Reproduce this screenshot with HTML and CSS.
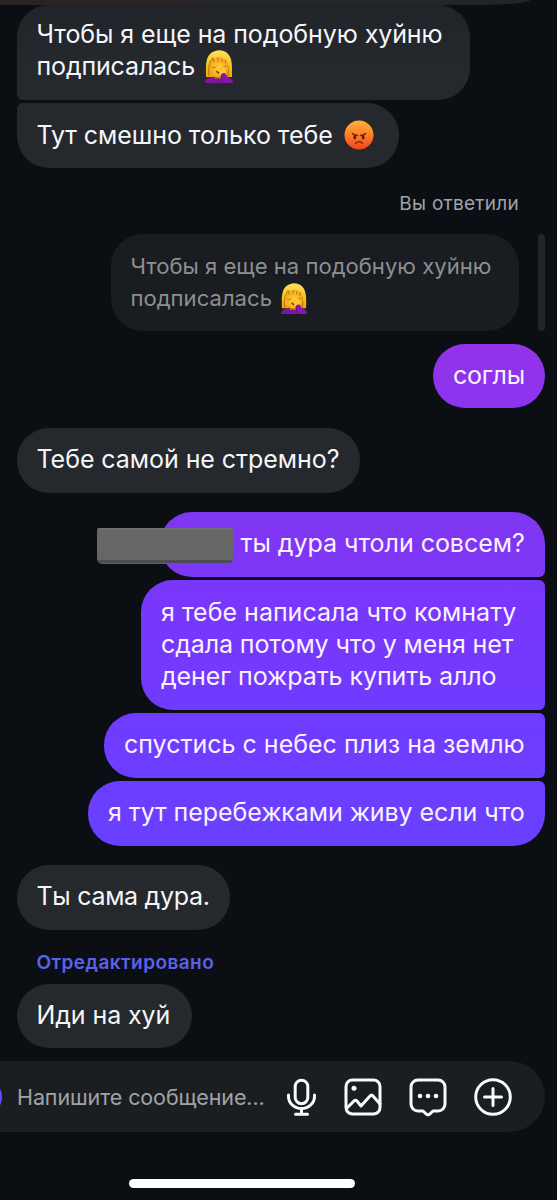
FILE: index.html
```html
<!DOCTYPE html>
<html lang="ru">
<head>
<meta charset="utf-8">
<title>Чат</title>
<link rel="stylesheet" href="styles.css">
</head>
<body>
<svg class="defs" width="0" height="0" aria-hidden="true">
  <defs>
    <linearGradient id="hair" x1="0" y1="0" x2="0" y2="1"><stop offset="0" stop-color="#ffe05a"/><stop offset="1" stop-color="#eaa900"/></linearGradient>
    <radialGradient id="skin"><stop offset="0" stop-color="#ffd13b"/><stop offset="1" stop-color="#f4a91b"/></radialGradient>
    <linearGradient id="rage" x1="0" y1="0" x2="0" y2="1"><stop offset="0" stop-color="#ffb13e"/><stop offset=".5" stop-color="#ff7f25"/><stop offset="1" stop-color="#ee431c"/></linearGradient>
    <symbol id="facepalm" viewBox="0 0 30 33">
      <path d="M2 27C2 19 1 9 6 4c5-5 14-5 18 0 5 5 4 15 4 23z" fill="url(#hair)"/>
      <path d="M5 26c-1-8 0-14 4-18m15 18c1-8 0-12-3-16" fill="none" stroke="#bd7800" stroke-width="1.2"/>
      <path d="M1 33c0-4 4-6 9-6v-4h9l2 4c5 0 8 2 8 6z" fill="#7d169f"/>
      <ellipse cx="15" cy="17.500" rx="9.200" ry="10.500" fill="url(#skin)"/>
      <path d="M10 26c3 2 6 1 8 0l-1 2.500h-6z" fill="#c77a0a"/>
      <path d="M10 12l-1-4m5 4V8m4 4V9m3 4 1-3M8 17c1 1 3 1 4 0m8-1c1 1 2 1 3 0" fill="none" stroke="#b87309" stroke-width=".9" stroke-linecap="round"/>
      <path d="M12 20c4-2 8-3 10 0l-1 5-4 1z" fill="#ffc530"/>
      <path d="M13 21.500l1.500 1.500" stroke="#682800" stroke-width="1.500" stroke-linecap="round"/>
      <path d="M17 24.500c2-2 4-2 5 0l6 8.500H17z" fill="#8917ad"/>
      <path d="M17 25l2 8" stroke="#56106e" stroke-width=".8"/>
    </symbol>
    <symbol id="angry" viewBox="0 0 30 30">
      <circle cx="15" cy="15" r="14.500" fill="url(#rage)"/>
      <path d="M8.500 13.500c1.500 1.700 3 2 5 2m8-2c-1.500 1.700-3 2-5 2M11.500 23.500c1.500-2.500 5.500-2.500 7 0" fill="none" stroke="#70250b" stroke-width="1.400" stroke-linecap="round"/>
      <ellipse cx="10.800" cy="17.300" rx="1.400" ry="2.200" fill="#5b200c"/><ellipse cx="19.200" cy="17.300" rx="1.400" ry="2.200" fill="#5b200c"/>
    </symbol>
  </defs>
</svg>
<main class="chat">
  <div class="previous"></div>
  <div class="bubble in first"><span class="t1">Чтобы я еще на подобную хуйню</span><br><span class="t2">подписалась</span><svg class="face"><use href="#facepalm"/></svg></div>
  <div class="bubble in second"><span class="t3">Тут смешно только тебе</span><svg class="rage"><use href="#angry"/></svg></div>
  <div class="reply-label">Вы ответили</div>
  <div class="quote-row">
    <div class="quote"><span class="q1">Чтобы я еще на подобную хуйню</span><br><span class="q2">подписалась</span><svg class="face"><use href="#facepalm"/></svg></div>
    <div class="quote-bar"></div>
  </div>
  <div class="bubble out agree"><span>соглы</span></div>
  <div class="bubble in strange"><span>Тебе самой не стремно?</span></div>
  <div class="bubble out start"><div class="redaction"></div><span>ты дура чтоли совсем?</span></div>
  <div class="bubble out room"><span class="r1">я тебе написала что комнату</span><br><span class="r2">сдала потому что у меня нет</span><br><span class="r3">денег пожрать купить алло</span></div>
  <div class="bubble out earth"><span>спустись с небес плиз на землю</span></div>
  <div class="bubble out end"><span>я тут перебежками живу если что</span></div>
  <div class="bubble in self"><span>Ты сама дура.</span></div>
  <div class="edited">Отредактировано</div>
  <div class="bubble in last"><span>Иди на хуй</span></div>
</main>
<footer class="composer">
  <div class="camera"></div>
  <div class="placeholder">Напишите сообщение...</div>
  <div class="tools">
    <svg width="30" height="40" viewBox="0 0 30 40"><rect x="9.200" y="3.200" width="12.600" height="23.500" rx="6.300"/><path d="M2.500 18v1.500a13 12 0 0 0 26 0V18M15.500 32v5M9.500 37.300h12"/></svg>
    <svg class="wide-gap" width="38" height="40" viewBox="0 0 38 40"><rect x="2" y="3" width="34" height="34" rx="6.500"/><circle class="solid" cx="10" cy="11.300" r="2.500"/><path d="m3 31 7-7q1.500-1.500 3 0l4 5 9-10q1.500-2 3 0l7 8"/></svg>
    <svg width="38" height="40" viewBox="0 0 38 40"><path d="M9 3h20a7 7 0 0 1 7 7v17a7 7 0 0 1-7 7h-5l-3.600 3.400q-1.400 1-2.800 0L14 34H9a7 7 0 0 1-7-7V10a7 7 0 0 1 7-7z"/><g class="solid"><circle cx="11" cy="19" r="2.300"/><circle cx="19" cy="19" r="2.300"/><circle cx="27" cy="19" r="2.300"/></g></svg>
    <svg class="tight-gap" width="40" height="40" viewBox="0 0 40 40"><circle cx="20" cy="20" r="17.300"/><path d="M20 11.500v17M11.500 20h17"/></svg>
  </div>
</footer>
<div class="home"></div>
</body>
</html>
```
FILE: styles.css
```css
* { box-sizing: border-box; }
body { margin: 0; width: 557px; height: 1200px; overflow: hidden; background: #0b0f13; font-family: Inter, "Noto Sans", sans-serif; color: #f5f6fa; }
.defs { position: absolute; }
.chat { height: 1061px; display: flex; flex-direction: column; align-items: flex-start; }
.previous { width: 530px; height: 5px; flex: none; background: linear-gradient(90deg, #2a2423, #25262a 60%, #212429); border-radius: 0 0 55px 0 / 0 0 5px 0; }
.bubble { flex: none; height: 64.500px; border-radius: 32px; padding: 15px 20px; font-size: 25px; line-height: 32.300px; white-space: nowrap; }
.in { margin-left: 17px; padding-left: 19.500px; background: #25282d; }
.out { align-self: flex-end; margin-right: 12px; color: #fbf2ff; }
.first { width: 453px; height: 94.500px; padding-top: 13px; background: linear-gradient(#202327, #25282d 60%); border-bottom-left-radius: 6px; }
.second { width: 382px; margin-top: 3.500px; padding-top: 15.500px; border-top-left-radius: 6px; }
.t1, .t3 { letter-spacing: -.08px; }
.t2 { letter-spacing: -.15px; }
.face { width: 30px; height: 33px; margin-left: 9.500px; vertical-align: -7px; margin-top: -8px; margin-bottom: -8px; transform: translateY(-7px); }
.rage { width: 30px; height: 30px; margin: -5px 0 -5px 11px; vertical-align: -5px; transform: translateY(-4px); }
.reply-label { align-self: flex-end; margin: 24px 38px 0 0; height: 24px; line-height: 24px; font-size: 19px; letter-spacing: .27px; color: #a0a3aa; white-space: nowrap; }
.quote-row { align-self: flex-end; margin: 18px 12px 0 0; display: flex; gap: 19px; height: 97px; flex: none; }
.quote { width: 408px; border-radius: 32px; background: #191c20; color: #8d8f93; padding: 16.500px 19.500px; font-size: 22.100px; line-height: 32px; white-space: nowrap; }
.quote .face { width: 28px; height: 31px; margin-left: 8.500px; transform: translateY(-7px); }
.quote-bar { width: 7px; border-radius: 4px; background: #212429; }
.agree { width: 112px; margin-top: 13px; background: linear-gradient(#9333ea, #8b34ef); }
.agree span { letter-spacing: -.2px; }
.strange { width: 343px; margin-top: 20px; }
.strange span { letter-spacing: -.06px; }
.start { position: relative; width: 385px; margin-top: 19.500px; padding-left: 80.500px; border-bottom-right-radius: 6px; background: linear-gradient(#8036f1, #7d37f7); }
.start span { letter-spacing: -.04px; }
.redaction { position: absolute; left: -63px; top: 15.500px; width: 136px; height: 36px; border-radius: 2px 2px 5px 5px; background: linear-gradient(#737277, #666 7%, #666 87%, #45434a 92%, #626075); }
.room { width: 404px; height: 129.500px; margin-top: 3.500px; padding-top: 15.500px; border-radius: 32px 6px 6px 32px; background: linear-gradient(#7a37fa, #703aff); }
.r2 { letter-spacing: -.1px; }
.r3 { letter-spacing: -.08px; }
.earth { width: 441px; margin-top: 3.500px; border-radius: 32px 6px 6px 32px; background: linear-gradient(#703bff, #6d3eff); }
.end { width: 457px; margin-top: 3.500px; border-top-right-radius: 6px; background: linear-gradient(#6c3eff, #6940ff); }
.end span { letter-spacing: -.07px; }
.self { width: 213px; margin-top: 19.500px; }
.self span { letter-spacing: -.3px; }
.edited { margin: 21px 0 0 36.500px; height: 24px; line-height: 24px; font-size: 19px; font-weight: 600; letter-spacing: .44px; color: #5961ed; white-space: nowrap; }
.last { width: 175px; margin-top: 9px; }
.last span { letter-spacing: -.1px; }
.composer { width: 545px; height: 71px; border-radius: 0 36px 36px 0; background: #1b1e20; display: flex; align-items: center; overflow: hidden; }
.camera { width: 36px; height: 36px; border-radius: 50%; background: #5b4fff; margin-left: -34px; flex: none; }
.placeholder { width: 269px; margin-left: 15px; flex: none; font-size: 21.500px; letter-spacing: -.1px; color: #a0a3a8; white-space: nowrap; }
.tools { display: flex; align-items: center; }
.tools svg { flex: none; fill: none; stroke: #fafafa; stroke-width: 3; stroke-linecap: round; stroke-linejoin: round; }
.tools svg + svg { margin-left: 27px; }
.tools svg.wide-gap { margin-left: 28px; }
.tools svg.tight-gap { margin-left: 26px; }
.tools .solid { fill: #fafafa; stroke: none; }
.home { width: 226px; height: 9px; border-radius: 5px; background: #fff; margin: 47px 0 0 129px; }
```
